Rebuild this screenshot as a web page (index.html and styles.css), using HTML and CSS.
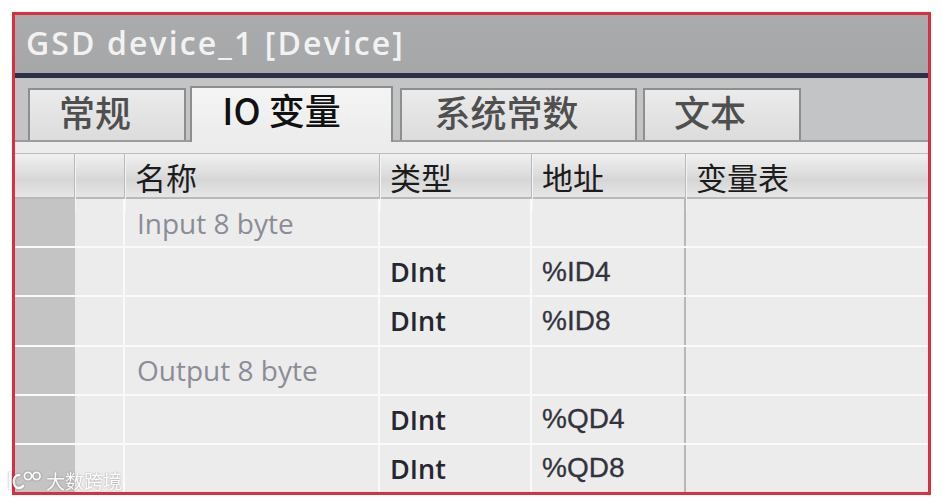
FILE: index.html
```html
<!DOCTYPE html>
<html lang="zh">
<head>
<meta charset="utf-8">
<link rel="stylesheet" href="styles.css">
</head>
<body>
<div class="frame">
  <div class="titlebar"><span class="title">GSD device_1 [Device]</span></div>
  <div class="rule"></div>
  <div class="tabstrip">
    <div class="tab t1">常规</div>
    <div class="tab t2 active">IO 变量</div>
    <div class="tab t3">系统常数</div>
    <div class="tab t4">文本</div>
  </div>
  <div class="gap"></div>
  <div class="table">
    <div class="row head">
      <div class="c c0"></div>
      <div class="c c1"></div>
      <div class="c c2">名称</div>
      <div class="c c3">类型</div>
      <div class="c c4">地址</div>
      <div class="c c5">变量表</div>
    </div>
    <div class="row">
      <div class="c c0"></div><div class="c c1"></div>
      <div class="c c2 dim">Input 8 byte</div>
      <div class="c c3"></div><div class="c c4"></div><div class="c c5"></div>
    </div>
    <div class="row">
      <div class="c c0"></div><div class="c c1"></div><div class="c c2"></div>
      <div class="c c3 type">DInt</div>
      <div class="c c4 addr">%ID4</div>
      <div class="c c5"></div>
    </div>
    <div class="row">
      <div class="c c0"></div><div class="c c1"></div><div class="c c2"></div>
      <div class="c c3 type">DInt</div>
      <div class="c c4 addr">%ID8</div>
      <div class="c c5"></div>
    </div>
    <div class="row">
      <div class="c c0"></div><div class="c c1"></div>
      <div class="c c2 dim">Output 8 byte</div>
      <div class="c c3"></div><div class="c c4"></div><div class="c c5"></div>
    </div>
    <div class="row">
      <div class="c c0"></div><div class="c c1"></div><div class="c c2"></div>
      <div class="c c3 type">DInt</div>
      <div class="c c4 addr">%QD4</div>
      <div class="c c5"></div>
    </div>
    <div class="row last">
      <div class="c c0"></div><div class="c c1"></div><div class="c c2"></div>
      <div class="c c3 type">DInt</div>
      <div class="c c4 addr">%QD8</div>
      <div class="c c5"></div>
    </div>
  </div>
</div>
<div class="watermark">
  <svg class="wm-logo" width="36" height="24" viewBox="0 0 36 24">
    <path d="M3 5 L3 20 M12 7 C5 7 5 20 12 20 C14 20 15 19 16 18" fill="none" stroke="#fff" stroke-width="2.5" stroke-linecap="round"/>
    <circle cx="21" cy="8" r="3.6" fill="none" stroke="#fff" stroke-width="1.8"/>
    <circle cx="29.5" cy="8" r="3.6" fill="none" stroke="#fff" stroke-width="1.8"/>
  </svg>
  <span class="wm-text">大数跨境</span>
</div>
</body>
</html>
```

FILE: styles.css
```css
html, body {
  margin: 0;
  padding: 0;
  background: #ffffff;
}
body {
  width: 943px;
  height: 501px;
  position: relative;
  overflow: hidden;
  font-family: "Open Sans", "Noto Sans CJK SC", sans-serif;
}
.frame {
  margin: 12px 0 0 12px;
  width: 913px;
  height: 477px;
  border: 3px solid #d9303f;
  display: flex;
  flex-direction: column;
  background: #ececec;
  overflow: hidden;
}
.titlebar {
  height: 58px;
  flex: none;
  background: linear-gradient(#aaabad, #a6a7a9);
  display: flex;
  align-items: center;
  padding-left: 11px;
}
.title {
  color: #f2f2f2;
  font-family: "Open Sans", sans-serif;
  font-weight: 600;
  font-size: 32px;
  letter-spacing: 2.1px;
  line-height: 1;
  margin-top: -2px;
}
.rule {
  height: 5px;
  flex: none;
  background: #2c3047;
}
.tabstrip {
  height: 64px;
  flex: none;
  background: #c3c4c5;
  border-bottom: 2px solid #9c9c9c;
  box-sizing: border-box;
  display: flex;
  align-items: flex-end;
  padding-left: 13px;
}
.tab {
  height: 52px;
  box-sizing: border-box;
  border: 2px solid #8e8e8e;
  border-bottom: none;
  background: linear-gradient(#ebebeb, #dcdcdc);
  color: #4f4f4f;
  font-family: "Noto Sans CJK SC", sans-serif;
  font-weight: 500;
  font-size: 36px;
  line-height: 1;
  display: flex;
  align-items: center;
  justify-content: center;
  padding-right: 24px;
  padding-bottom: 8px;
}
.t1 { width: 158px; }
.t2 { width: 203px; margin-left: 4px; }
.t3 { width: 237px; margin-left: 7px; }
.t4 { width: 158px; margin-left: 6px; }
.tab.active {
  height: 56px;
  margin-bottom: -2px;
  background: linear-gradient(#f4f4f4, #ececec);
  color: #111111;
  padding-right: 20px;
  padding-bottom: 12px;
}
.gap {
  height: 11px;
  flex: none;
  background: #ececec;
}
.table {
  flex: 1;
  display: flex;
  flex-direction: column;
}
.row {
  display: grid;
  grid-template-columns: 60px 50px 255px 152px 154px 1fr;
  flex: 1;
  border-bottom: 2px solid #fafafa;
}
.row.last { border-bottom: none; }
.row.head {
  flex: none;
  height: 46px;
  box-sizing: border-box;
  border-top: 1px solid #bdbdbd;
  border-bottom: 2px solid #b9b9b9;
  background: linear-gradient(#f0f0f0 0%, #dedede 45%, #d6d6d6 60%, #e6e6e6 100%);
}
.c {
  display: flex;
  align-items: center;
  padding-left: 11px;
  border-right: 2px solid #fafafa;
  min-width: 0;
}
.c0 {
  background: #c4c4c4;
  border-right: none;
}
.head .c {
  background: transparent;
  border-right: 1px solid #b9b9b9;
  box-shadow: inset 1px 0 0 #f4f4f4;
  font-family: "Noto Sans CJK SC", sans-serif;
  font-size: 31px;
  color: #1c1c1c;
  padding-left: 10px;
  padding-bottom: 12px;
}
.head .c0 { box-shadow: none; }
.head .c5 { border-right: none; }
.c4 { border-right: 2px solid #b7b7b7; }
.c5 { border-right: none; }
.dim {
  font-family: "Open Sans", sans-serif;
  font-size: 28px;
  color: #8c8c98;
  padding-left: 12px;
  padding-bottom: 0;
}
.type {
  font-family: "Open Sans", sans-serif;
  font-weight: 600;
  font-size: 27px;
  color: #262630;
  padding-left: 10px;
}
.addr {
  font-family: "Liberation Sans", Arial, sans-serif;
  font-size: 28px;
  color: #33333d;
  padding-left: 10px;
  -webkit-text-stroke: 0.3px #33333d;
}
.watermark {
  position: absolute;
  left: 7px;
  top: 468px;
  display: flex;
  align-items: center;
  gap: 3px;
  opacity: 0.92;
}
.wm-text {
  font-family: "Noto Sans CJK SC", sans-serif;
  font-size: 19px;
  color: #ffffff;
  text-shadow: 0 0 2px rgba(0,0,0,0.4);
  line-height: 1;
}
.wm-logo {
  filter: drop-shadow(0 0 1px rgba(0,0,0,0.4));
}
```
